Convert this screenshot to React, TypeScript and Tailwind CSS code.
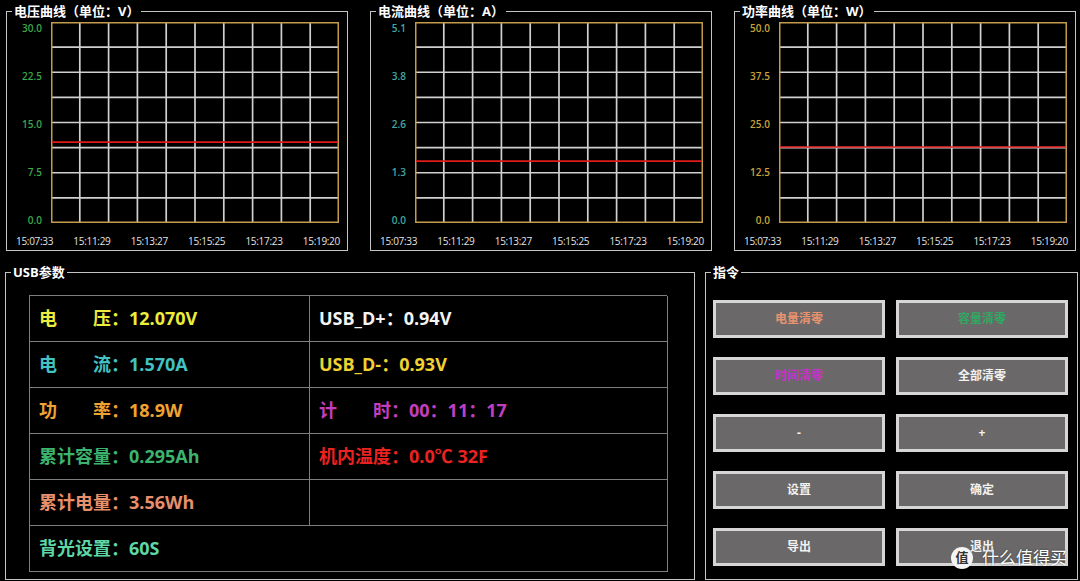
const font = { fontFamily: '"Open Sans", "Noto Sans CJK SC", sans-serif' };

const times = ['15:07:33', '15:11:29', '15:13:27', '15:15:25', '15:17:23', '15:19:20'];

const charts = [
  { title: '电压曲线（单位：V）', ticks: ['30.0', '22.5', '15.0', '7.5', '0.0'], tickColor: 'text-[#3da84a]', value: 12.07, max: 30 },
  { title: '电流曲线（单位：A）', ticks: ['5.1', '3.8', '2.6', '1.3', '0.0'], tickColor: 'text-[#45a8a0]', value: 1.57, max: 5.1 },
  { title: '功率曲线（单位：W）', ticks: ['50.0', '37.5', '25.0', '12.5', '0.0'], tickColor: 'text-[#c9a53a]', value: 18.9, max: 50 },
];

const rows = [
  { left: { label: '电　　压：', value: '12.070V', color: 'text-[#ecec3c]' }, right: { label: 'USB_D+：', value: '0.94V', color: 'text-[#f4f4f4]' } },
  { left: { label: '电　　流：', value: '1.570A', color: 'text-[#42c2c2]' }, right: { label: 'USB_D-：', value: '0.93V', color: 'text-[#f0d232]' } },
  { left: { label: '功　　率：', value: '18.9W', color: 'text-[#f0a232]' }, right: { label: '计　　时：', value: '00：11：17', color: 'text-[#c03ec0]' } },
  { left: { label: '累计容量：', value: '0.295Ah', color: 'text-[#3cb46e]' }, right: { label: '机内温度：', value: '0.0℃ 32F', color: 'text-[#ea2222]' } },
  { left: { label: '累计电量：', value: '3.56Wh', color: 'text-[#e8906c]' }, right: null },
];

const buttons = [
  { text: '电量清零', color: 'text-[#e8936f]' },
  { text: '容量清零', color: 'text-[#2fa862]' },
  { text: '时间清零', color: 'text-[#c632c6]' },
  { text: '全部清零', color: 'text-[#f2f2f2]' },
  { text: '-', color: 'text-[#f2f2f2]' },
  { text: '+', color: 'text-[#f2f2f2]' },
  { text: '设置', color: 'text-[#f2f2f2]' },
  { text: '确定', color: 'text-[#f2f2f2]' },
  { text: '导出', color: 'text-[#f2f2f2]' },
  { text: '退出', color: 'text-[#f2f2f2]' },
];

function Plot({ value, max }: { value: number; max: number }) {
  const w = 288;
  const h = 201;
  const y = h - (value / max) * h;
  return (
    <svg width={w} height={h} viewBox={`0 0 ${w} ${h}`} className="block shrink-0">
      {Array.from({ length: 9 }, (_, i) => (
        <line key={`v${i}`} x1={(i + 1) * 28.8} y1={0} x2={(i + 1) * 28.8} y2={h} stroke="#d0d0d0" strokeWidth={1.7} />
      ))}
      {Array.from({ length: 7 }, (_, i) => (
        <line key={`h${i}`} x1={0} y1={(i + 1) * 25.125} x2={w} y2={(i + 1) * 25.125} stroke="#d0d0d0" strokeWidth={1.7} />
      ))}
      <rect x={0.75} y={0.75} width={w - 1.5} height={h - 1.5} fill="none" stroke="#c39b4c" strokeWidth={1.5} />
      <line x1={1} y1={y} x2={w - 1} y2={y} stroke="#e01a1a" strokeWidth={1.6} />
    </svg>
  );
}

function Chart({ chart }: { chart: (typeof charts)[number] }) {
  return (
    <fieldset className="w-[342px] h-[249px] border border-[#c4c4c4]">
      <legend className="ml-[5px] px-[2px] text-[13px] leading-[18px] font-bold text-white">{chart.title}</legend>
      <div className="flex items-start pt-[2px]">
        <div className={`flex flex-col justify-between items-end w-[35px] h-[204px] text-[10px] leading-[12px] font-semibold ${chart.tickColor}`}>
          {chart.ticks.map((t) => (
            <span key={t}>{t}</span>
          ))}
        </div>
        <div className="ml-[9px]">
          <Plot value={chart.value} max={chart.max} />
        </div>
      </div>
      <div className="flex justify-between ml-[9px] mr-[7px] mt-[9px] text-[10px] leading-[12px] tracking-[-0.03em] text-[#e4e4e4]">
        {times.map((t) => (
          <span key={t}>{t}</span>
        ))}
      </div>
    </fieldset>
  );
}

function Cell({ item, span }: { item: { label: string; value: string; color: string } | null; span?: boolean }) {
  return (
    <div className={`flex items-center pl-[9px] border-r border-b border-[#7e7e7e] text-[18px] font-bold ${span ? 'col-span-2' : ''} ${item ? item.color : ''}`}>
      {item && (
        <>
          <span>{item.label}</span>
          <span>{item.value}</span>
        </>
      )}
    </div>
  );
}

export default function App() {
  return (
    <div className="relative w-[1080px] h-[581px] overflow-hidden bg-black" style={font}>
      {/* Curves */}
      <div className="flex gap-[22px] pl-[6px] mt-[2px]">
        {charts.map((c) => (
          <Chart key={c.title} chart={c} />
        ))}
      </div>

      <div className="flex gap-[10px] pl-[5px] mt-[12px]">
        {/* USB parameters */}
        <fieldset className="w-[690px] h-[317px] border border-[#c4c4c4]">
          <legend className="ml-[5px] px-[2px] text-[13px] leading-[18px] font-bold text-white">USB参数</legend>
          <div className="grid grid-cols-[280px_358px] auto-rows-[46px] ml-[23px] mt-[14px] w-[638px] border-t border-l border-[#7e7e7e]">
            {rows.map((r, i) => (
              <div key={i} className="contents">
                <Cell item={r.left} />
                <Cell item={r.right} />
              </div>
            ))}
            <Cell item={{ label: '背光设置：', value: '60S', color: 'text-[#5fd6a6]' }} span />
          </div>
        </fieldset>

        {/* Commands */}
        <fieldset className="w-[373px] h-[317px] border border-[#c4c4c4]">
          <legend className="ml-[5px] px-[2px] text-[13px] leading-[18px] font-bold text-white">指令</legend>
          <div className="grid grid-cols-2 gap-x-[11px] gap-y-[19px] ml-[7px] mr-[9px] mt-[19px]">
            {buttons.map((b) => (
              <div
                key={b.text}
                className={`flex items-center justify-center h-[38px] border-[3px] border-[#d6d6d6] bg-[#6a6868] text-[12px] font-bold ${b.color}`}
              >
                {b.text}
              </div>
            ))}
          </div>
        </fieldset>
      </div>

      {/* watermark over the last button, as in the screenshot */}
      <div className="absolute left-[951px] top-[547px] flex items-center gap-[9px] text-white">
        <div className="flex items-center justify-center w-[22px] h-[22px] rounded-full bg-[#f4f4f4] text-[13px] font-bold text-[#333]">值</div>
        <span className="text-[17px] leading-[22px] [text-shadow:0_0_2px_rgba(0,0,0,0.6)]">什么值得买</span>
      </div>
    </div>
  );
}
